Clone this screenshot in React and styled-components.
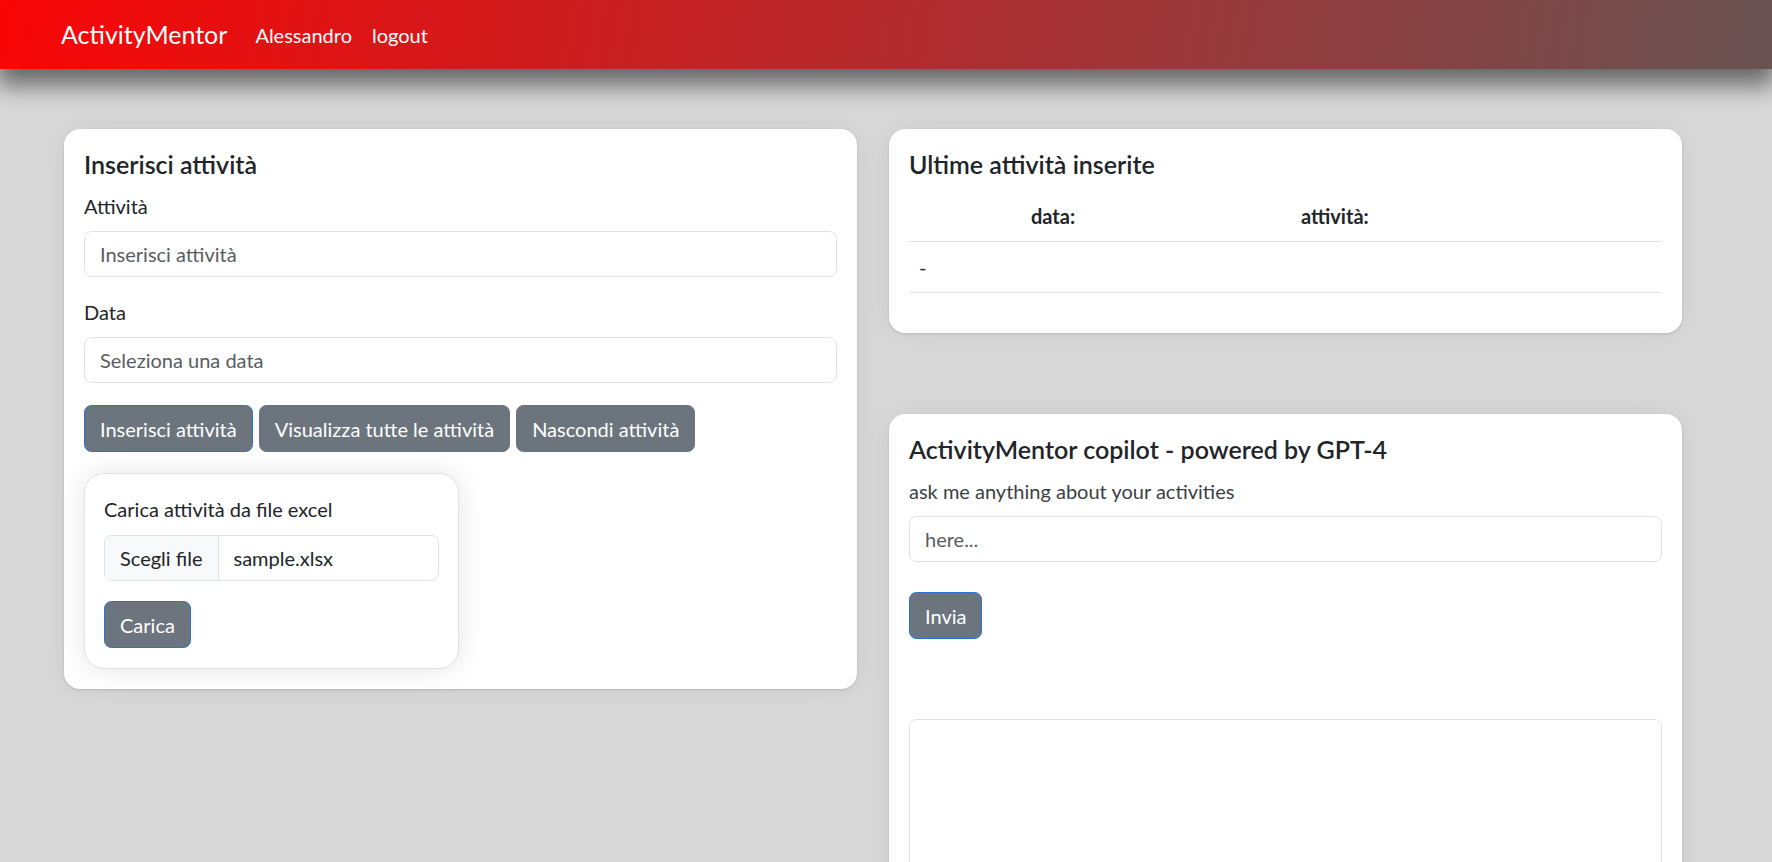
import React from 'react';
import styled, { createGlobalStyle } from 'styled-components';

const App = () => {
	return (
		<>
			<GlobalStyle />
			<Navbar>
				<Brand href="#">ActivityMentor</Brand>
				<NavLink href="#">Alessandro</NavLink>
				<NavLink href="#">logout</NavLink>
			</Navbar>
			<Main>
				<Column>
					<Card>
						<CardTitle>Inserisci attività</CardTitle>
						<FieldGroup>
							<Label>Attività</Label>
							<Input placeholder="Inserisci attività" />
						</FieldGroup>
						<FieldGroup>
							<Label>Data</Label>
							<Input placeholder="Seleziona una data" />
						</FieldGroup>
						<ButtonRow>
							<Button $focused>Inserisci attività</Button>
							<Button>Visualizza tutte le attività</Button>
							<Button>Nascondi attività</Button>
						</ButtonRow>
						<UploadCard>
							<Label>Carica attività da file excel</Label>
							<FilePicker>
								<FileButton>Scegli file</FileButton>
								<FileName>sample.xlsx</FileName>
							</FilePicker>
							<Button $focused>Carica</Button>
						</UploadCard>
					</Card>
				</Column>
				<Column>
					<Card>
						<CardTitle>Ultime attività inserite</CardTitle>
						<Table>
							<colgroup>
								<col style={{ width: 112 }} />
								<col style={{ width: 270 }} />
								<col />
							</colgroup>
							<thead>
								<tr>
									<th></th>
									<th>data:</th>
									<th>attività:</th>
								</tr>
							</thead>
							<tbody>
								<tr>
									<td>-</td>
									<td></td>
									<td></td>
								</tr>
							</tbody>
						</Table>
					</Card>
					<Card>
						<CardTitle>ActivityMentor copilot - powered by GPT-4</CardTitle>
						<FieldGroup>
							<Label $muted>ask me anything about your activities</Label>
							<Input placeholder="here..." />
						</FieldGroup>
						<SendRow>
							<Button $focused>Invia</Button>
						</SendRow>
						<Answer readOnly />
					</Card>
				</Column>
			</Main>
		</>
	);
};

export default App;

// Styled components
const GlobalStyle = createGlobalStyle`
	* {
		box-sizing: border-box;
	}

	body {
		margin: 0;
		background-color: #d9d9d9;
		font-family: Lato, "Open Sans", sans-serif;
		font-size: 20px;
		line-height: 1.5;
		color: #212529;
		overflow: hidden;
	}
`;

const Navbar = styled.nav`
	display: flex;
	align-items: center;
	height: 69px;
	padding: 0 61px;
	background: linear-gradient(100deg, #f90606 0%, #b42a2d 50%, #685252 100%);
	box-shadow: 0 12px 26px 4px rgba(0, 0, 0, 0.55);
	position: relative;
	z-index: 1;
`;

const Brand = styled.a`
	color: #fff;
	font-size: 25px;
	line-height: 1.5;
	text-decoration: none;
	margin-right: 18px;
`;

const NavLink = styled.a`
	color: #fff;
	font-size: 20px;
	text-decoration: none;
	padding: 0 10px;
`;

const Main = styled.main`
	display: flex;
	align-items: flex-start;
	gap: 32px;
	padding: 60px 0 0 64px;
`;

const Column = styled.div`
	display: flex;
	flex-direction: column;
	gap: 81px;
	width: 793px;
`;

const Card = styled.section`
	background: #fff;
	border-radius: 16px;
	padding: 20px;
	box-shadow: 0 1px 3px rgba(0, 0, 0, 0.12), 0 0 30px rgba(0, 0, 0, 0.07);
`;

const CardTitle = styled.h5`
	margin: 0 0 12px;
	font-size: 25px;
	font-weight: 600;
	line-height: 30px;
	color: #212529;
`;

const FieldGroup = styled.div`
	margin-bottom: 20px;
`;

const Label = styled.label`
	display: block;
	margin-bottom: 10px;
	line-height: 30px;
	color: ${(p) => (p.$muted ? '#3b3f43' : '#212529')};
`;

const Input = styled.input`
	display: block;
	width: 100%;
	height: 46px;
	padding: 7px 15px;
	font: inherit;
	line-height: 30px;
	color: #212529;
	background: #fff;
	border: 1px solid #dee2e6;
	border-radius: 7.5px;
	outline: none;

	&::placeholder {
		color: #595c5f;
	}
`;

const ButtonRow = styled.div`
	display: flex;
	gap: 6px;
	margin-top: 22px;
`;

const Button = styled.button`
	height: 47px;
	padding: 7px 15px;
	font: inherit;
	line-height: 30px;
	color: #fff;
	background-color: #6c757d;
	border: 1px solid ${(p) => (p.$focused ? '#2b70d8' : '#6c757d')};
	border-radius: 7.5px;
	cursor: pointer;
`;

const UploadCard = styled.div`
	width: 375px;
	margin-top: 21px;
	padding: 20px 19px 20px;
	background: #fff;
	border: 1px solid #dee2e6;
	border-radius: 20px;
	box-shadow: 0 0 28px rgba(0, 0, 0, 0.1);
`;

const FilePicker = styled.div`
	display: flex;
	height: 46px;
	margin: 11px 0 20px;
	border: 1px solid #dee2e6;
	border-radius: 7.5px;
	overflow: hidden;
`;

const FileButton = styled.span`
	display: flex;
	align-items: center;
	padding: 0 15px;
	background-color: #f8f9fa;
	border-right: 1px solid #dee2e6;
`;

const FileName = styled.span`
	display: flex;
	align-items: center;
	padding: 0 15px;
`;

const Table = styled.table`
	width: 100%;
	table-layout: fixed;
	border-collapse: collapse;
	margin: 0 0 20px;

	th,
	td {
		padding: 10px;
		line-height: 30px;
		text-align: left;
		border-bottom: 1px solid #dee2e6;
	}

	th {
		font-weight: 700;
	}
`;

const SendRow = styled.div`
	margin-top: 30px;
	margin-bottom: 80px;
`;

const Answer = styled.textarea`
	display: block;
	width: 100%;
	height: 260px;
	font: inherit;
	border: 1px solid #dee2e6;
	border-radius: 7.5px;
	resize: none;
	outline: none;
`;
